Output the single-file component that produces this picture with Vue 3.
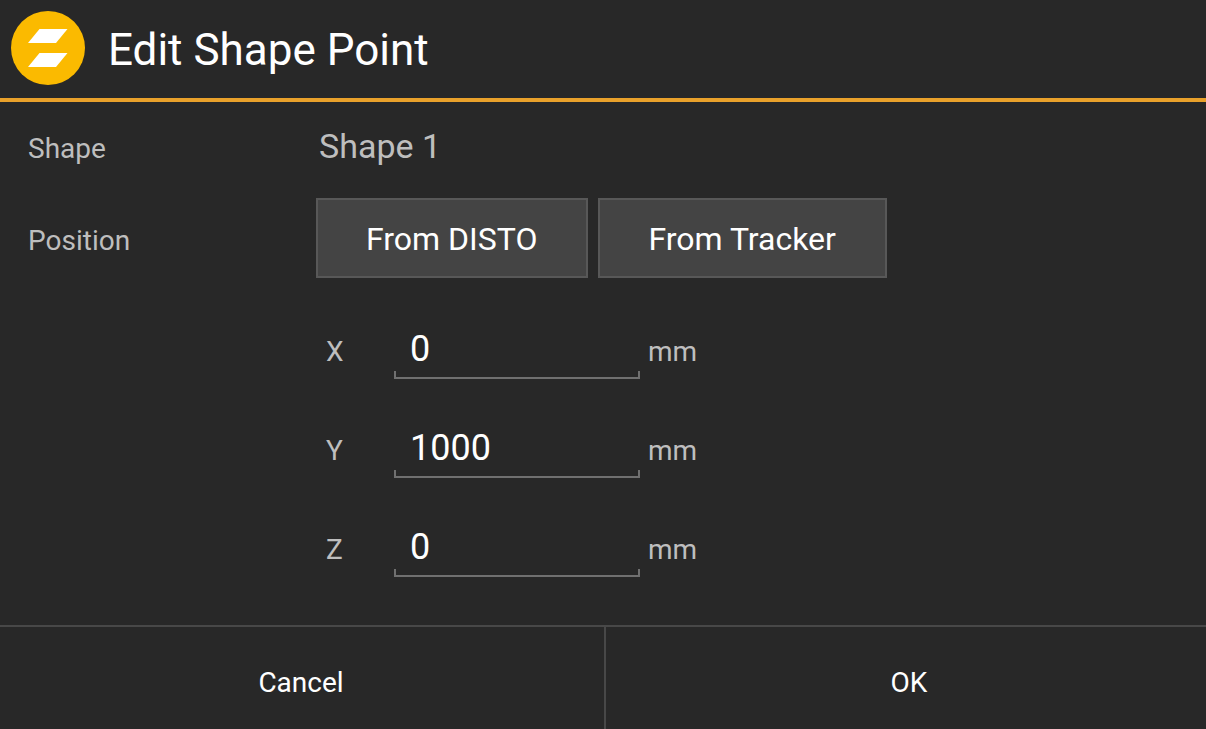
<template>
  <form class="dialog" @submit.prevent="save">
    <header class="header">
      <svg class="logo" viewBox="0 0 74 74" aria-hidden="true">
        <circle cx="37" cy="37" r="37" fill="#fbba00" />
        <path d="M28.5 18H56.5L45 32H17Z" fill="#fff" />
        <path d="M28.5 42H56.5L45 56H17Z" fill="#fff" />
      </svg>
      <h1 class="title">Edit Shape Point</h1>
    </header>

    <main class="content">
      <div class="row">
        <div class="label">Shape</div>
        <div class="shape-name">{{ shapeName }}</div>
      </div>
      <div class="row position-row">
        <div class="label">Position</div>
        <div class="sources">
          <button type="button" class="source">From DISTO</button>
          <button type="button" class="source">From Tracker</button>
        </div>
      </div>
      <div class="axes">
        <div v-for="axis in axes" :key="axis.name" class="axis">
          <label class="axis-name" :for="axis.name">{{ axis.name }}</label>
          <div class="field">
            <input :id="axis.name" v-model="axis.value" class="input" type="text" inputmode="numeric" autocomplete="off" />
          </div>
          <span class="unit">mm</span>
        </div>
      </div>
    </main>

    <footer class="footer">
      <button type="button" class="action cancel" @click="cancel">Cancel</button>
      <button type="submit" class="action accept">OK</button>
    </footer>
  </form>
</template>

<script setup>
import { ref } from 'vue'

const emit = defineEmits(['cancel', 'save'])
const shapeName = ref('Shape 1')
const axes = ref([
  { name: 'X', value: '0' },
  { name: 'Y', value: '1000' },
  { name: 'Z', value: '0' }
])
const cancel = () => {
  emit('cancel')
}
const save = () => {
  emit('save', axes.value)
}
</script>

<style>
body {
  background-color: #282828;
}
</style>

<style scoped>
.dialog {
  box-sizing: border-box;
  min-height: 100vh;
  display: flex;
  flex-direction: column;
  background-color: #282828;
  color: #bebebe;
  font-family: Roboto, sans-serif;
  font-size: 28px;
  line-height: 32px;
}
.header {
  box-sizing: border-box;
  display: flex;
  align-items: center;
  gap: 23px;
  height: 102px;
  padding: 0 11px 2px;
  border-bottom: 4px solid #e9a12b;
}
.logo {
  width: 74px;
  height: 74px;
}
.title {
  margin: 0;
  padding-top: 4px;
  color: #fff;
  font-size: 44px;
  font-weight: 400;
  line-height: 52px;
}
.content {
  flex: 1;
  padding: 24px 28px 0;
}
.row {
  display: grid;
  grid-template-columns: 288px 1fr;
  align-items: center;
}
.label {
  padding-top: 5px;
}
.shape-name {
  padding-left: 3px;
  font-size: 34px;
  line-height: 40px;
}
.position-row {
  margin-top: 32px;
}
.sources {
  display: flex;
  gap: 10px;
}
.source {
  height: 80px;
  padding: 2px 49px 0 48px;
  border: 2px solid #585858;
  background-color: #444;
  color: #fff;
  font-family: inherit;
  font-size: 32px;
}
.axes {
  display: flex;
  flex-direction: column;
  gap: 48px;
  margin: 50px 0 0 298px;
}
.axis {
  display: flex;
  align-items: center;
}
.axis-name {
  width: 68px;
  padding-bottom: 4px;
}
.unit {
  padding-bottom: 4px;
}
.field {
  position: relative;
  width: 246px;
  margin-right: 8px;
}
/* bracket-shaped underline */
.field::after {
  content: '';
  position: absolute;
  left: 0;
  right: 0;
  bottom: 0;
  height: 6px;
  border: 2px solid #707070;
  border-top: 0;
  pointer-events: none;
}
.input {
  box-sizing: border-box;
  display: block;
  width: 100%;
  height: 51px;
  padding: 0 16px 10px;
  border: 0;
  outline: 0;
  background: transparent;
  color: #fff;
  font-family: inherit;
  font-size: 36px;
}
.footer {
  display: grid;
  grid-template-columns: calc(50% + 3px) 1fr;
  height: 102px;
  border-top: 2px solid #484848;
}
.action {
  border: 0;
  padding: 8px 0 0;
  background: transparent;
  color: #fff;
  font-family: inherit;
  font-size: 28px;
}
.cancel {
  padding-right: 2px;
  border-right: 2px solid #484848;
}
.accept {
  padding-left: 6px;
}
</style>
